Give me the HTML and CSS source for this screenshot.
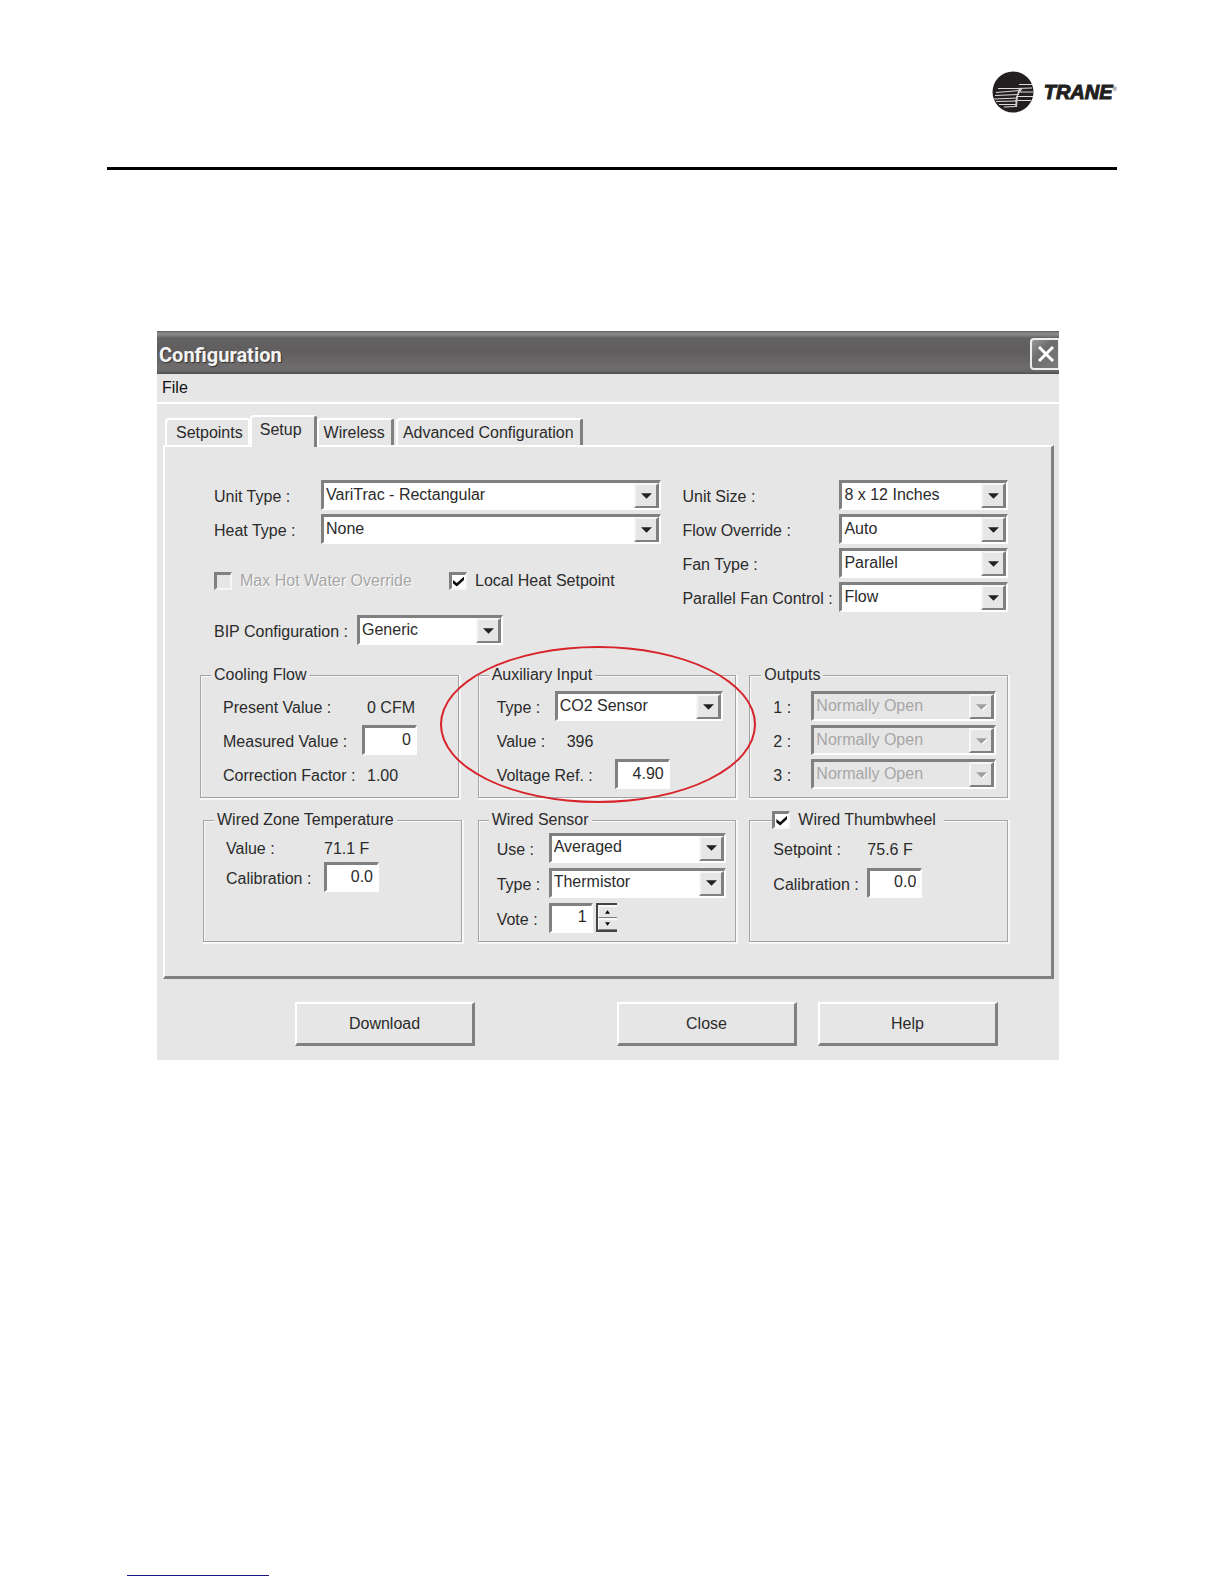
FILE: index.html
```html
<!DOCTYPE html>
<html lang="en">
<head>
<meta charset="utf-8">
<meta name="viewport" content="width=device-width, initial-scale=1">
<title>Configuration</title>
<link rel="stylesheet" href="styles.css">
</head>
<body>
<svg class="defs" aria-hidden="true">
  <symbol id="arrow" viewBox="0 0 12 6"><path d="M0 0h12L6 6z" fill="currentColor"/></symbol>
</svg>
<header class="masthead">
  <div class="brand">
    <svg class="brand-mark" viewBox="0 0 42 42" role="img" aria-label="Trane logo">
      <circle cx="21" cy="21" r="20.5" fill="#231f20"/>
      <g fill="none" stroke="#ddd" stroke-width="1">
        <path d="M27 13.5h13M6 17.5h23M24 17.5l16-.5M4 21.5l24-2M26 21h15M3 24.5l24-1M24 25.5h17M2 28l24-1M4 30.500l21-.5M23 29.500h16M7 33.500l18 0M12 36l12-.5"/>
      </g>
      <path d="M27 17l4 0-5 7-1 12-2 0 1-9z" fill="#ccc"/>
    </svg>
    <span class="brand-name">TRANE</span><span class="brand-reg">®</span>
  </div>
</header>

<main class="dialog" aria-labelledby="dialog-title">
  <div class="titlebar">
    <h1 id="dialog-title" class="title">Configuration</h1>
    <button class="close-x" type="button" aria-label="Close window">
      <svg viewBox="0 0 18 18" aria-hidden="true"><path d="M2 2l14 14M16 2L2 16" stroke="#fff" stroke-width="3" fill="none"/></svg>
    </button>
  </div>
  <nav class="menubar"><button class="menu" type="button">File</button></nav>

  <div class="tabs" role="tablist">
    <button class="tab tab-first" type="button" role="tab">Setpoints</button>
    <button class="tab tab-active" type="button" role="tab" aria-selected="true">Setup</button>
    <button class="tab" type="button" role="tab">Wireless</button>
    <button class="tab" type="button" role="tab">Advanced Configuration</button>
  </div>

  <form class="panel">
    <div class="top">
      <div class="top-left">
        <div class="field">
          <label class="label w-unit" for="unit-type">Unit Type :</label>
          <span class="combo"><select id="unit-type"><option>VariTrac - Rectangular</option></select><span class="drop"><svg><use href="#arrow"/></svg></span></span>
        </div>
        <div class="field">
          <label class="label w-unit" for="heat-type">Heat Type :</label>
          <span class="combo"><select id="heat-type"><option>None</option></select><span class="drop"><svg><use href="#arrow"/></svg></span></span>
        </div>
        <div class="checks">
          <label class="check check-off"><input type="checkbox" disabled>Max Hot Water Override</label>
          <label class="check"><input type="checkbox" checked>Local Heat Setpoint</label>
        </div>
        <div class="field">
          <label class="label w-bip" for="bip">BIP Configuration :</label>
          <span class="combo combo-bip"><select id="bip"><option>Generic</option></select><span class="drop"><svg><use href="#arrow"/></svg></span></span>
        </div>
      </div>
      <div class="top-right">
        <div class="field">
          <label class="label w-size" for="unit-size">Unit Size :</label>
          <span class="combo"><select id="unit-size"><option>8 x 12 Inches</option></select><span class="drop"><svg><use href="#arrow"/></svg></span></span>
        </div>
        <div class="field">
          <label class="label w-size" for="flow">Flow Override :</label>
          <span class="combo"><select id="flow"><option>Auto</option></select><span class="drop"><svg><use href="#arrow"/></svg></span></span>
        </div>
        <div class="field">
          <label class="label w-size" for="fan">Fan Type :</label>
          <span class="combo"><select id="fan"><option>Parallel</option></select><span class="drop"><svg><use href="#arrow"/></svg></span></span>
        </div>
        <div class="field">
          <label class="label w-size" for="pfan">Parallel Fan Control :</label>
          <span class="combo"><select id="pfan"><option>Flow</option></select><span class="drop"><svg><use href="#arrow"/></svg></span></span>
        </div>
      </div>
    </div>

    <div class="groups groups-upper">
      <fieldset class="group group-cooling">
        <legend>Cooling Flow</legend>
        <div class="row"><span class="label w-cool">Present Value :</span><output class="value">0 CFM</output></div>
        <div class="row"><label class="label w-measured" for="measured">Measured Value :</label><input id="measured" class="num" type="text" value="0"></div>
        <div class="row"><span class="label w-cool">Correction Factor :</span><output class="value">1.00</output></div>
      </fieldset>
      <fieldset class="group group-aux">
        <legend>Auxiliary Input</legend>
        <div class="row"><label class="label w-aux" for="aux-type">Type :</label>
          <span class="combo"><select id="aux-type"><option>CO2 Sensor</option></select><span class="drop"><svg><use href="#arrow"/></svg></span></span></div>
        <div class="row"><span class="label w-auxval">Value :</span><output class="value">396</output></div>
        <div class="row"><label class="label w-volt" for="volt">Voltage Ref. :</label><input id="volt" class="num" type="text" value="4.90"></div>
        <span class="callout" aria-hidden="true"></span>
      </fieldset>
      <fieldset class="group group-out">
        <legend>Outputs</legend>
        <div class="row"><label class="label w-out" for="o1">1 :</label>
          <span class="combo combo-off"><select id="o1" disabled><option>Normally Open</option></select><span class="drop"><svg><use href="#arrow"/></svg></span></span></div>
        <div class="row"><label class="label w-out" for="o2">2 :</label>
          <span class="combo combo-off"><select id="o2" disabled><option>Normally Open</option></select><span class="drop"><svg><use href="#arrow"/></svg></span></span></div>
        <div class="row"><label class="label w-out" for="o3">3 :</label>
          <span class="combo combo-off"><select id="o3" disabled><option>Normally Open</option></select><span class="drop"><svg><use href="#arrow"/></svg></span></span></div>
      </fieldset>
    </div>

    <div class="groups groups-lower">
      <fieldset class="group group-zone">
        <legend>Wired Zone Temperature</legend>
        <div class="row"><span class="label w-zone">Value :</span><output class="value">71.1 F</output></div>
        <div class="row"><label class="label w-zone" for="zone-cal">Calibration :</label><input id="zone-cal" class="num" type="text" value="0.0"></div>
      </fieldset>
      <fieldset class="group group-sensor">
        <legend>Wired Sensor</legend>
        <div class="row"><label class="label w-sensor" for="use">Use :</label>
          <span class="combo"><select id="use"><option>Averaged</option></select><span class="drop"><svg><use href="#arrow"/></svg></span></span></div>
        <div class="row"><label class="label w-sensor" for="stype">Type :</label>
          <span class="combo"><select id="stype"><option>Thermistor</option></select><span class="drop"><svg><use href="#arrow"/></svg></span></span></div>
        <div class="row"><label class="label w-sensor" for="vote">Vote :</label><input id="vote" class="num num-vote" type="text" value="1">
          <span class="spin">
            <button type="button" aria-label="Increase"><svg viewBox="0 0 6 4"><path d="M0 4h6L3 0z"/></svg></button>
            <button type="button" aria-label="Decrease"><svg viewBox="0 0 6 4"><path d="M0 0h6L3 4z"/></svg></button>
          </span></div>
      </fieldset>
      <fieldset class="group group-thumb">
        <legend><label class="check"><input type="checkbox" checked>Wired Thumbwheel</label></legend>
        <div class="row"><span class="label w-thumb">Setpoint :</span><output class="value">75.6 F</output></div>
        <div class="row"><label class="label w-thumb" for="thumb-cal">Calibration :</label><input id="thumb-cal" class="num" type="text" value="0.0"></div>
      </fieldset>
    </div>
  </form>

  <div class="actions">
    <button class="action action-download" type="button">Download</button>
    <button class="action" type="button">Close</button>
    <button class="action" type="button">Help</button>
  </div>
</main>

<footer class="footer"><div class="footer-line"></div></footer>
</body>
</html>
```
FILE: styles.css
```css
:root {
  --face: #e6e6e6;
  --shade: #808080;
  --ink: #2b2b2b;
}

* { box-sizing: border-box; }

body {
  margin: 0;
  min-height: 100vh;
  display: flex;
  flex-direction: column;
  background: #fff;
  color: var(--ink);
  font: 16px/20px "Liberation Sans", Arial, sans-serif;
}

button, input, select { font: inherit; color: inherit; border-radius: 0; }
button { padding: 0; background: var(--face); }

.defs { position: absolute; width: 0; height: 0; }

/* Page header */
.masthead {
  margin: 0 107px;
  padding: 71px 0 54px;
  border-bottom: 3px solid #000;
}
.brand { display: flex; justify-content: flex-end; align-items: center; color: #231f20; }
.brand-mark { width: 42px; height: 42px; margin-right: 10px; }
.brand-name {
  font: italic bold 20px/20px "Liberation Sans", sans-serif;
  -webkit-text-stroke: 1px #231f20;
}
.brand-reg { font: 6px/14px "Liberation Sans", sans-serif; padding-bottom: 6px; }

/* Dialog frame */
.dialog { margin: 161px 165px 0 157px; background: var(--face); }

.titlebar {
  display: flex;
  align-items: center;
  justify-content: space-between;
  height: 43px;
  padding-left: 2px;
  background: linear-gradient(#5c5a5b 0, #8a8a8a 2px, #858585 4px, #646263 7px, #5f5d5e 20px, #6e6c6d 36px, #6a6869 40px, #4f4d4e 43px);
}
.title {
  margin: 0;
  padding-top: 5px;
  color: #f4f4f4;
  font: bold 20px/24px Roboto, "Open Sans", sans-serif;
  text-shadow: 1px 1px 1px #333;
}
.close-x {
  display: grid;
  place-items: center;
  width: 29px;
  height: 32px;
  padding-left: 1px;
  margin-top: 3px;
  border: 2px solid #eee;
  border-right-width: 1px;
  border-radius: 4px 0 0 4px;
  background: linear-gradient(135deg, #999, #6c6c6c 40%, #7c7c7c);
}
.close-x svg { width: 18px; height: 18px; }

.menubar { height: 30px; padding: 4px 5px; border-bottom: 2px solid #fff; }
.menu { border: 0; color: #111; }

/* Tabs */
.tabs { display: flex; align-items: flex-end; padding: 11px 8px 0; }
.tab {
  height: 27px;
  padding: 0 6px 0 5px;
  margin-right: 2px;
  border: 2px solid #fff;
  border-right: 3px solid var(--shade);
  border-bottom: 0;
  border-radius: 4px 3px 0 0;
}
.tab-first { border-right: 2px solid #fff; margin-right: 0; padding: 0 5px 0 9px; }
.tab-active { height: 32px; margin: 0 0 -2px; padding: 0 12px 4px 8px; position: relative; }

.panel {
  margin: 0 5px 0 6px;
  padding: 33px 43px 34px 35px;
  border: 2px solid #fff;
  border-right: 3px solid var(--shade);
  border-bottom: 3px solid var(--shade);
}

/* Fields */
.top { display: flex; gap: 21px; padding-left: 14px; }
.top-left { flex: 448; }
.top-right { flex: 326; }
.field { display: flex; align-items: center; margin-bottom: 4px; }
.field:last-child { margin-bottom: 0; }
.label { flex: none; padding-top: 4px; white-space: nowrap; }
.value { padding-top: 4px; }

.w-unit { width: 107px; }
.w-bip { width: 143px; }
.w-size { width: 157px; }
.w-cool { width: 144px; }
.w-measured { width: 139px; }
.w-aux { width: 58px; }
.w-auxval { width: 70px; }
.w-volt { width: 118px; }
.w-out { width: 38px; }
.w-zone { width: 98px; }
.w-sensor { width: 52px; }
.w-thumb { width: 94px; }

.combo {
  flex: 1;
  display: grid;
  grid-template: 25px / minmax(0, 1fr);
  height: 30px;
  background: #fff;
  border: 2px solid #fff;
  border-top: 3px solid var(--shade);
  border-left: 3px solid var(--shade);
}
.combo-bip { flex: none; width: 146px; }
.combo select {
  grid-area: 1 / 1;
  appearance: none;
  width: 100%;
  padding: 0 26px 2px 2px;
  border: 0;
  background: none;
  opacity: 1;
}
.drop {
  grid-area: 1 / 1;
  justify-self: end;
  display: grid;
  place-items: center;
  width: 25px;
  background: var(--face);
  border: 2px solid #f6f6f6;
  border-right: 3px solid var(--shade);
  border-bottom: 2px solid var(--shade);
  pointer-events: none;
}
.drop svg { width: 11px; height: 6px; color: #222; }
.combo-off { background: var(--face); color: #a6a6a6; }
.combo-off .drop svg { color: #a0a0a0; filter: drop-shadow(1px 1px 0 #fff); }

.num {
  width: 55px;
  height: 30px;
  padding: 0 4px 2px 0;
  text-align: right;
  background: #fff;
  border: 2px solid #fff;
  border-top: 3px solid var(--shade);
  border-left: 3px solid var(--shade);
}
.num-vote { width: 44px; }

.checks { display: flex; align-items: center; height: 30px; margin: 22px 0 19px; }
.checks .check:first-child { flex: none; width: 235px; }
.check { display: flex; align-items: center; white-space: nowrap; }
.check-off { color: #a6a6a6; text-shadow: 1px 1px 0 #fff; }
.check input {
  appearance: none;
  display: grid;
  place-items: center;
  width: 18px;
  height: 18px;
  margin: 0 8px 0 0;
  background: #fff;
  border: 2px solid #f6f6f6;
  border-top: 3px solid var(--shade);
  border-left: 3px solid var(--shade);
}
.check input:disabled { background: var(--face); }
.check input:checked::before {
  content: "";
  width: 11px;
  height: 10px;
  background: #111;
  clip-path: polygon(0 35%, 35% 65%, 100% 0, 100% 35%, 35% 100%, 0 70%);
}

/* Group boxes */
.groups { display: flex; gap: 13px; }
.groups-upper { margin-top: 20px; }
.groups-lower { margin-top: 12px; padding-left: 3px; }
.groups-upper .group-cooling { margin-right: 6px; }
.groups-lower .group-zone { margin-right: 3px; }
.group {
  flex: 1 1 30%;
  min-width: 0;
  margin: 0;
  padding: 4px 11px 6px 22px;
  border: 1px solid #a4a4a4;
  box-shadow: 1px 1px 0 1px #f8f8f8, inset 1px 1px 0 #f8f8f8;
}
.group legend { height: 20px; margin-left: -12px; padding: 0 3px; background: var(--face); }
.groups-lower .group { padding-top: 0; }
.row { display: flex; align-items: center; height: 34px; }
.group-aux { position: relative; padding-left: 18px; padding-right: 12px; }
.group-out, .group-thumb { padding-left: 23px; }
.group-sensor { padding-left: 18px; padding-right: 9px; }
.group-aux legend, .group-sensor legend { margin-left: -8px; }
.groups-lower .row { height: 35px; }
.groups-lower .group-zone { padding-top: 2px; }
.groups-lower .group-zone .row { height: 30px; }
.group-thumb legend { margin-left: -1px; padding: 0 8px 0 0; }
.group-thumb .check { height: 20px; }

.callout {
  position: absolute;
  inset: -39px -21px -6px -39px;
  border: 2px solid #d8232a;
  border-radius: 50%;
  pointer-events: none;
}

.spin {
  display: grid;
  grid-template-rows: 1fr 1fr;
  width: 21px;
  height: 29px;
  margin-left: 3px;
  border: 2px solid #444;
  border-right: 0;
}
.spin button {
  display: grid;
  place-items: center;
  min-height: 0;
  border: 2px solid #f8f8f8;
  border-width: 2px 0 1px 1px;
  border-bottom-color: var(--shade);
}
.spin svg { width: 5px; height: 4px; }

/* Action buttons */
.actions { display: flex; justify-content: flex-end; gap: 21px; padding: 23px 61px 14px; }
.action {
  width: 180px;
  height: 44px;
  border: 2px solid #fff;
  border-right: 3px solid var(--shade);
  border-bottom: 3px solid var(--shade);
}
.action-download { margin-right: 121px; }

.footer { margin-top: auto; padding: 0 127px 8px; }
.footer-line { width: 142px; height: 1px; background: #1a1a80; }
```
